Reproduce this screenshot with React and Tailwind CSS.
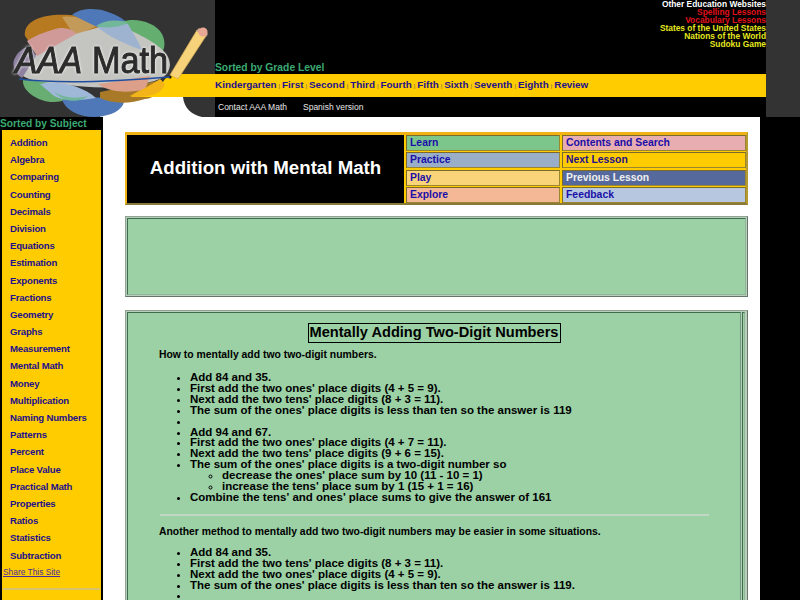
const subjects = ['Addition', 'Algebra', 'Comparing', 'Counting', 'Decimals', 'Division', 'Equations', 'Estimation', 'Exponents', 'Fractions', 'Geometry', 'Graphs', 'Measurement', 'Mental Math', 'Money', 'Multiplication', 'Naming Numbers', 'Patterns', 'Percent', 'Place Value', 'Practical Math', 'Properties', 'Ratios', 'Statistics', 'Subtraction'];
const grades = ['Kindergarten', 'First', 'Second', 'Third', 'Fourth', 'Fifth', 'Sixth', 'Seventh', 'Eighth', 'Review'];

function Logo() {
  return (
    <svg width="215" height="117" viewBox="0 0 215 117" className="block">
      <rect width="215" height="117" fill="#333333" />
      {/* white page corner and yellow band running into the logo */}
      <path d="M100 117 L100 97 L183 97 C184 108 192 115 202 117 Z" fill="#ffffff" />
      {/* colour blobs */}
      <path d="M25 36 C23 20 45 13 70 15 C85 16 95 22 100 28 L60 50 L35 50 Z" fill="#b87a20" />
      <path d="M62 17 C75 15 90 20 97 26 L75 36 Z" fill="#c39a5a" />
      <path d="M72 15 C80 8 95 8 105 11 C115 14 122 18 128 23 L100 28 C90 24 80 18 72 15 Z" fill="#4f78b8" />
      <path d="M122 22 C135 17 155 22 162 34 C166 42 165 50 160 55 L130 45 Z" fill="#64ae70" />
      <path d="M23 80 C22 90 35 100 50 102 C60 102 70 100 75 96 L60 78 Z" fill="#68ad72" />
      <path d="M62 100 C80 97 110 96 124 102 C122 110 112 116 95 117 C78 117 66 110 62 100 Z" fill="#4f78b8" />
      <path d="M100 92 L162 80 C162 92 155 98 145 99 C130 104 112 104 100 98 Z" fill="#a87a28" />
      <path d="M14 62 C18 52 28 50 36 55 L75 34 L100 27 L130 30 C150 40 170 50 170 65 C169 76 160 80 150 82 C120 90 90 88 60 84 C40 82 14 80 14 62 Z" fill="#c4c4c0" />
      <path d="M27 41 C38 34 50 30 60 28 C68 28 74 30 76 34 L37 56 Z" fill="#cf9a98" />
      <path d="M14 60 C17 52 24 47 30 46 L36 56 L22 78 C15 74 12 66 14 60 Z" fill="#8d80a0" />
      <path d="M97 27 C108 24 120 23 128 24 C132 32 138 40 142 50 C125 44 108 36 97 27 Z" fill="#9db3cf" />
      <path d="M96 26 C105 20 118 19 128 23 C120 27 106 29 96 26 Z" fill="#72b79a" />
      <path d="M40 84 C60 80 82 86 96 98 C82 100 66 102 54 96 Z" fill="#9fb8d8" />
      <path d="M54 92 C64 98 76 99 88 96 C80 102 66 104 54 92 Z" fill="#72b79a" />
      <path d="M98 84 C115 82 135 78 150 76 L145 90 C130 92 112 94 98 84 Z" fill="#dca08a" />
      <path d="M172 74 L215 74 L215 97 L132 97 C146 94 160 88 165 79 Z" fill="#ffcc00" />
      <path d="M130 96 C140 90 150 86 160 79 L165 84 C162 92 156 97 132 97 Z" fill="#f2b418" />
      {/* pencil */}
      <path d="M170 75 L197 30 L206 36 L178 79 Z" fill="#f6d27a" stroke="#d1aa55" strokeWidth="0.7" />
      <path d="M196 31 L199 28 L208 34 L206 37 Z" fill="#c9a58a" />
      <circle cx="203" cy="32" r="4.6" fill="#e8a795" />
      <circle cx="170" cy="77" r="1.6" fill="#111111" />
      <path d="M19 79 C60 84 110 82 170 77" fill="none" stroke="#1f4ea0" strokeWidth="1.5" />
      {/* wordmark */}
      <text x="15" y="73" className="drop-shadow-[0_0_1.5px_#ffffff]" fontFamily="'Liberation Sans', sans-serif" fontSize="36" fontStyle="italic" fill="#2c2c2c" stroke="#2c2c2c" strokeWidth="1" textLength="67" lengthAdjust="spacingAndGlyphs">AAA</text>
      <text x="92" y="73" className="drop-shadow-[0_0_1.5px_#ffffff]" fontFamily="'Liberation Sans', sans-serif" fontSize="36" fill="#2c2c2c" stroke="#2c2c2c" strokeWidth="1" textLength="76" lengthAdjust="spacingAndGlyphs">Math</text>
    </svg>
  );
}

function NavCell({ bg, text = 'text-[#1a0fa8]', children }) {
  return (
    <div className={`${bg} ${text} border border-t-[#7c6a2c] border-l-[#7c6a2c] border-r-[#9a8530] border-b-[#9a8530] pl-[3px] text-[10.4px] font-bold leading-[13px]`}>
      {children}
    </div>
  );
}

function GreenBox({ className, children }) {
  return (
    <div className={`${className} border border-t-[#8fa392] border-l-[#8fa392] border-r-[#66756a] border-b-[#66756a] bg-[#b9cdbb] p-[1px]`}>
      <div className="h-full border border-t-[#3f6b4f] border-l-[#3f6b4f] border-r-[#8fb59a] border-b-[#8fb59a] bg-[#9bd1a5] p-[0.5px]">
        {children}
      </div>
    </div>
  );
}

export default function App() {
  return (
    <div className="flex h-[600px] w-[800px] flex-col overflow-hidden bg-black font-['Liberation_Sans',Arial,sans-serif]">
      {/* Header */}
      <div className="flex h-[117px] shrink-0">
        <Logo />
        <div className="flex w-[551px] flex-col">
          <div className="relative h-[74px]">
            <div className="flex flex-col items-end text-right text-[8.4px] font-bold leading-[8px]">
              <span className="text-white">Other Education Websites</span>
              <span className="text-[#e0101a]">Spelling Lessons</span>
              <span className="text-[#e0101a]">Vocabulary Lessons</span>
              <span className="text-[#e6e81e]">States of the United States</span>
              <span className="text-[#e6e81e]">Nations of the World</span>
              <span className="text-[#e6e81e]">Sudoku Game</span>
            </div>
            <div className="absolute bottom-0 left-0 text-[10.3px] font-bold leading-[12px] text-[#3aaa72]">Sorted by Grade Level</div>
          </div>
          <div className="flex h-[23px] items-center bg-[#ffcc00] pb-[1px] text-[9.9px] font-bold text-[#23108c]">
            {grades.map((g, i) => (
              <span key={g}>
                {i > 0 && <span className="mx-[2px] text-[6px] font-normal text-[#666]">|</span>}
                {g}
              </span>
            ))}
          </div>
          <div className="flex h-[20px] items-center gap-[16px] pl-[3px] text-[8.5px] text-[#e8e8e8]">
            <span>Contact AAA Math</span>
            <span>Spanish version</span>
          </div>
        </div>
        <div className="w-[34px] bg-[#333333]" />
      </div>

      <div className="flex min-h-0 flex-1">
        {/* Sidebar */}
        <div className="w-[103px] shrink-0">
          <div className="h-[13px] text-[10.2px] font-bold leading-[13px] text-[#3aaa72]">Sorted by Subject</div>
          <div className="ml-[2px] h-[470px] w-[99px] bg-[#ffcc00] pt-[4px]">
            {subjects.map(s => (
              <div key={s} className="h-[17.2px] pl-[8px] text-[9.6px] font-bold leading-[17.2px] tracking-[-0.2px] text-[#23108c]">{s}</div>
            ))}
            <div className="mt-[1px] pl-[1px] text-[8.4px] leading-[14px] text-[#4b2a9c] underline">Share This Site</div>
            <div className="mx-[1px] mt-[9px] border-t-2 border-[#d9c26a]" />
          </div>
        </div>

        {/* Main */}
        <div className="h-full w-[657px] bg-white pl-[22px] pt-[15px]">
          <div className="flex h-[73px] w-[623px] gap-[2px] border-2 border-t-[3px] border-t-[#efb316] border-l-[#efb316] border-r-[#b59a30] border-b-[#8a7a3a] bg-[#ffcc00]">
            <div className="flex h-full w-[277px] items-center justify-center bg-black pb-[2px] text-[18.7px] font-bold text-white">Addition with Mental Math</div>
            <div className="grid flex-1 grid-cols-[154px_1fr] grid-rows-4 gap-x-[2px] gap-y-[1.5px]">
              <NavCell bg="bg-[#7cc68c]">Learn</NavCell>
              <NavCell bg="bg-[#e8adb0]">Contents and Search</NavCell>
              <NavCell bg="bg-[#9aaec8]">Practice</NavCell>
              <NavCell bg="bg-[#ffcc00]" text="text-[#23108c]">Next Lesson</NavCell>
              <NavCell bg="bg-[#fad478]">Play</NavCell>
              <NavCell bg="bg-[#56699c]" text="text-[#f0f0f0]">Previous Lesson</NavCell>
              <NavCell bg="bg-[#f4b896]">Explore</NavCell>
              <NavCell bg="bg-[#b7c7e0]">Feedback</NavCell>
            </div>
          </div>

          <GreenBox className="mt-[11px] h-[81px] w-[623px]" />

          <div className="mt-[13px] flex h-[300px] w-[623px] border border-t-[#8fa392] border-l-[#8fa392] border-r-[#66756a] border-b-[#66756a] bg-[#b9cdbb] p-[1px]">
            <div className="h-full w-[614px] border border-t-[#3f6b4f] border-l-[#3f6b4f] border-r-[#6f9a7c] border-b-[#8fb59a] bg-[#9bd1a5] text-black">
              <div className="flex justify-center pt-[10px]">
                <h1 className="h-[20px] w-[253px] whitespace-nowrap border border-black text-center text-[14.6px] font-bold leading-[17px]">Mentally Adding Two-Digit Numbers</h1>
              </div>
              <p className="ml-[31px] mt-[5px] text-[10.4px] font-bold leading-[13px]">How to mentally add two two-digit numbers.</p>
              <ul className="mt-[11px] list-disc pl-[62px] text-[11.5px] font-bold leading-[10.9px]">
                <li>Add 84 and 35.</li>
                <li>First add the two ones' place digits (4 + 5 = 9).</li>
                <li>Next add the two tens' place digits (8 + 3 = 11).</li>
                <li>The sum of the ones' place digits is less than ten so the answer is 119</li>
                <li className="h-[10.9px]"></li>
                <li>Add 94 and 67.</li>
                <li>First add the two ones' place digits (4 + 7 = 11).</li>
                <li>Next add the two tens' place digits (9 + 6 = 15).</li>
                <li>
                  The sum of the ones' place digits is a two-digit number so
                  <ul className="list-[circle] pl-[32px]">
                    <li>decrease the ones' place sum by 10 (11 - 10 = 1)</li>
                    <li>increase the tens' place sum by 1 (15 + 1 = 16)</li>
                  </ul>
                </li>
                <li>Combine the tens' and ones' place sums to give the answer of 161</li>
              </ul>
              <div className="ml-[32px] mt-[11px] w-[549px] border-t-2 border-[#c2d6c4]" />
              <p className="ml-[31px] mt-[9px] text-[10.4px] font-bold leading-[13px]">Another method to mentally add two two-digit numbers may be easier in some situations.</p>
              <ul className="mt-[9px] list-disc pl-[62px] text-[11.5px] font-bold leading-[10.9px]">
                <li>Add 84 and 35.</li>
                <li>First add the two tens' place digits (8 + 3 = 11).</li>
                <li>Next add the two ones' place digits (4 + 5 = 9).</li>
                <li>The sum of the ones' place digits is less than ten so the answer is 119.</li>
                <li className="h-[10.9px]"></li>
              </ul>
            </div>
            <div className="ml-[1px] h-full w-[3px] border border-t-[#3f6b4f] border-l-[#3f6b4f] border-r-[#8fb59a] border-b-[#8fb59a] bg-[#9bd1a5]" />
          </div>
        </div>
      </div>
    </div>
  );
}
